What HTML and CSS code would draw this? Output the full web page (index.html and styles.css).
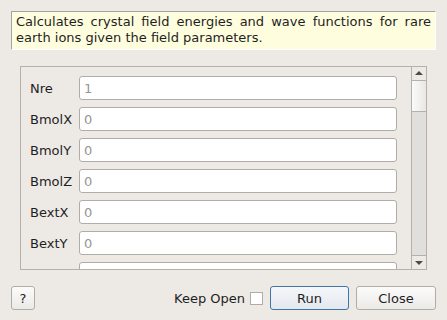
FILE: index.html
```html
<!DOCTYPE html>
<html lang="en">
<head>
  <meta charset="UTF-8">
  <title>Crystal Field</title>
  <link rel="stylesheet" href="styles.css">
</head>
<body>
  <div class="dialog">
    <p class="info">Calculates crystal field energies and wave functions for rare earth ions given the field parameters.</p>

    <div class="scrollArea">
      <div class="fields">
        <label class="row"><span>Nre</span><input type="text" placeholder="1"></label>
        <label class="row"><span>BmolX</span><input type="text" placeholder="0"></label>
        <label class="row"><span>BmolY</span><input type="text" placeholder="0"></label>
        <label class="row"><span>BmolZ</span><input type="text" placeholder="0"></label>
        <label class="row"><span>BextX</span><input type="text" placeholder="0"></label>
        <label class="row"><span>BextY</span><input type="text" placeholder="0"></label>
        <label class="row"><span>BextZ</span><input type="text" placeholder="0"></label>
      </div>
      <div class="scrollbar">
        <div class="arrow up"></div>
        <div class="handle"></div>
        <div class="trough"></div>
        <div class="arrow down"></div>
      </div>
    </div>

    <div class="buttons">
      <button class="help">?</button>
      <span class="spacer"></span>
      <label class="keep">Keep Open <input type="checkbox"></label>
      <button class="run">Run</button>
      <button class="close">Close</button>
    </div>
  </div>
</body>
</html>
```

FILE: styles.css
```css
html, body {
  margin: 0;
  padding: 0;
  background: #edeae6;
}
body {
  font-family: "DejaVu Sans", sans-serif;
  font-size: 13px;
  color: #1e1e1e;
}
.dialog {
  width: 447px;
  height: 320px;
  padding: 11px 11px 0 11px;
  box-sizing: border-box;
}
.info {
  margin: 0;
  height: 39px;
  box-sizing: border-box;
  padding: 2px 4px 0 4px;
  background: #fefedf;
  border-top: 1px solid #a5a39f;
  border-left: 1px solid #a5a39f;
  border-right: 1px solid #ffffff;
  border-bottom: 1px solid #ffffff;
  text-align: justify;
  line-height: 16px;
}
.scrollArea {
  margin: 16px 9px 0 9px;
  height: 202px;
  border: 1px solid #b4b1ad;
  display: flex;
  overflow: hidden;
}
.fields {
  flex: 1;
  padding: 9px 14px 0 9px;
  display: flex;
  flex-direction: column;
  gap: 7px;
}
.row {
  display: flex;
  align-items: center;
  height: 24px;
  flex-shrink: 0;
}
.row span {
  width: 49px;
}
.row input {
  flex: 1;
  height: 24px;
  box-sizing: border-box;
  border: 1px solid #b0ada9;
  border-radius: 3px;
  background: #fff;
  font-family: "DejaVu Sans", sans-serif;
  font-size: 13px;
  padding: 0 4px;
  margin: 0;
}
.row input::placeholder {
  color: #959595;
}
.scrollbar {
  width: 14px;
  border-left: 1px solid #b4b1ad;
  display: flex;
  flex-direction: column;
  background: #e0dfdb;
}
.arrow {
  height: 13px;
  background: #edeae6;
  position: relative;
}
.arrow.up {
  border-bottom: 1px solid #b4b1ad;
}
.arrow.down {
  border-top: 1px solid #b4b1ad;
}
.arrow::after {
  content: "";
  position: absolute;
  left: 3px;
  top: 4px;
  border-left: 4px solid transparent;
  border-right: 4px solid transparent;
}
.arrow.up::after {
  border-bottom: 4px solid #4a4a4a;
}
.arrow.down::after {
  top: 5px;
  border-top: 4px solid #4a4a4a;
}
.handle {
  height: 30px;
  background: linear-gradient(to right, #fbfbfa, #e9e7e4);
  border-bottom: 1px solid #b4b1ad;
}
.trough {
  flex: 1;
}
.buttons {
  display: flex;
  align-items: center;
  margin-top: 16px;
  height: 24px;
}
.spacer {
  flex: 1;
}
button {
  font-family: "DejaVu Sans", sans-serif;
  font-size: 13px;
  color: #1e1e1e;
  height: 24px;
  border: 1px solid #b0ada9;
  border-radius: 3px;
  background: linear-gradient(#fbfbfa, #eceae7);
  padding: 0;
}
.help {
  width: 24px;
}
.keep {
  display: flex;
  align-items: center;
  margin-right: 7px;
}
.keep input {
  width: 13px;
  height: 13px;
  margin: 0 0 0 5px;
  appearance: none;
  border: 1px solid #b0ada9;
  background: #fff;
}
.run {
  width: 79px;
  border-color: #3d76a8;
  background: linear-gradient(#f5f7f9, #e3e8ee);
  margin-right: 7px;
}
.close {
  width: 80px;
}
```
